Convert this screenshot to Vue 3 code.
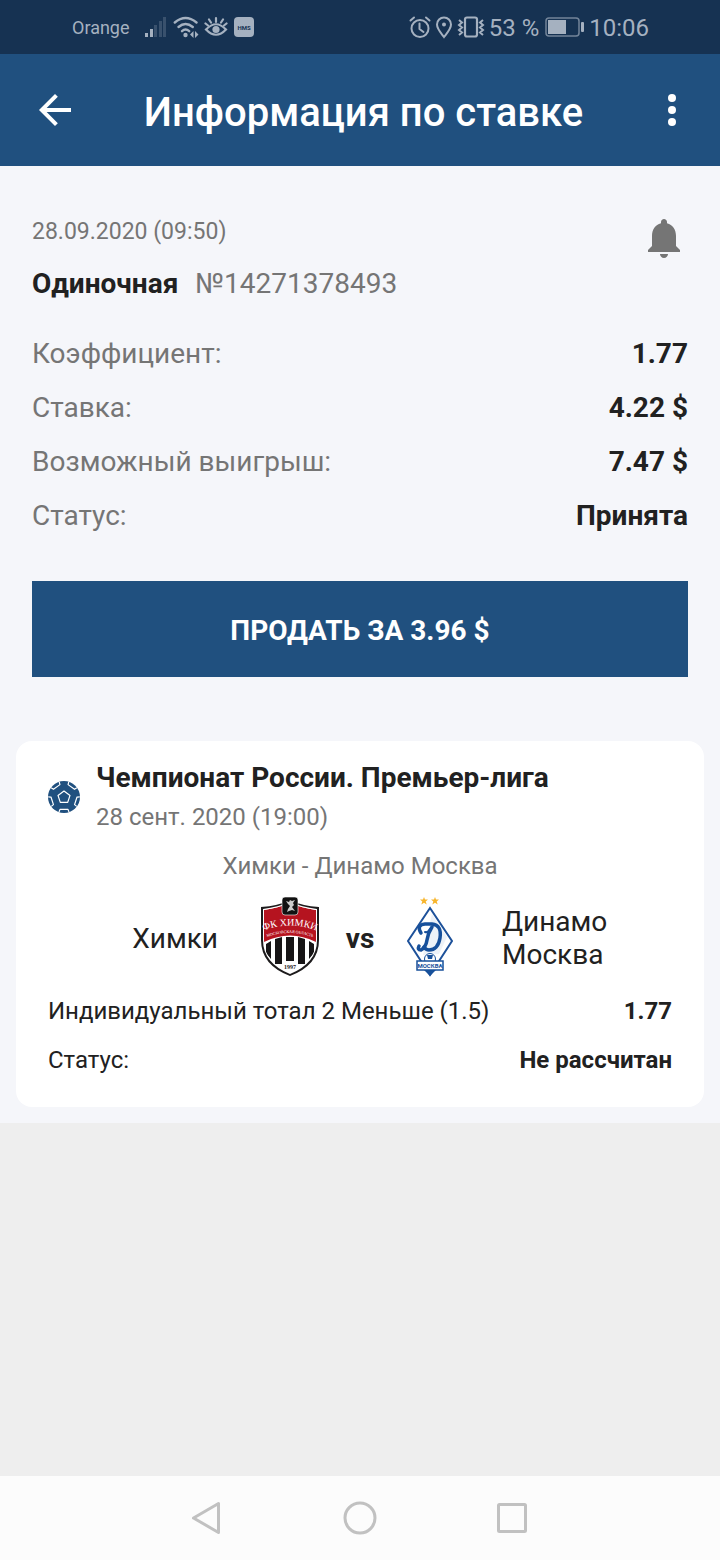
<template>
  <div class="screen">
    <div class="status-bar">
      <div class="status-group">
        <span class="carrier">Orange</span>
        <svg class="signal" width="24" height="24" viewBox="0 0 24 24" aria-hidden="true">
          <rect v-for="(b, i) in signalBars" :key="i" :x="b.x" :y="22 - b.h" width="3" :height="b.h" :opacity="b.on ? 1 : 0.25"/>
        </svg>
        <svg width="26" height="24" viewBox="0 0 26 24" aria-hidden="true">
          <g fill="none" stroke="currentColor" stroke-width="2.4" stroke-linecap="round">
            <path d="M1.800 7.500Q12.500-1.500 23.500 7.500"/>
            <path d="M5.500 12Q12.500 6 19.800 12"/>
            <path d="M9 16.200Q12.500 13 16.200 16.200"/>
          </g>
          <circle cx="12.500" cy="20" r="2.200"/>
          <path d="M20.500 16v7l-3.500-3.500zM22 16v7l3.500-3.500z"/>
        </svg>
        <svg width="24" height="24" viewBox="0 0 24 24" aria-hidden="true">
          <g fill="none" stroke="currentColor" stroke-width="2.2" stroke-linecap="round">
            <path d="M2 14.500Q12 4 22 14.500Q12 25 2 14.500z"/>
            <path d="M12 3v4M5 4.500l2 3M19 4.500l-2 3M1.500 8.500l2.500 2M22.500 8.500l-2.500 2"/>
          </g>
          <circle cx="12" cy="14.500" r="3.600"/>
        </svg>
        <svg class="hms" width="20" height="20" viewBox="0 0 20 20" aria-hidden="true">
          <rect width="20" height="20" rx="4"/>
          <text x="10" y="13">HMS</text>
        </svg>
      </div>
      <div class="status-group right">
        <svg width="22" height="24" viewBox="0 0 22 24" aria-hidden="true">
          <g fill="none" stroke="currentColor" stroke-width="2" stroke-linecap="round" stroke-linejoin="round">
            <circle cx="11" cy="13.500" r="8.500"/>
            <path d="M10.500 8.500v5.500l4 3M1.500 5.500L5 2.500M20.500 5.500L17 2.500"/>
          </g>
        </svg>
        <svg class="pin" width="18" height="24" viewBox="0 0 18 24" aria-hidden="true">
          <path d="M9 22C6 18 2 14 2 9.500a7 7 0 0 1 14 0C16 14 12 18 9 22z" fill="none" stroke="currentColor" stroke-width="2"/>
          <circle cx="9" cy="9.500" r="2"/>
        </svg>
        <svg class="vibrate" width="28" height="24" viewBox="0 0 28 24" aria-hidden="true">
          <g fill="none" stroke="currentColor" stroke-width="2">
            <rect x="8" y="2.500" width="12" height="19" rx="2" stroke-width="2.200"/>
            <path d="M2 5l3 2.500-3 2.500 3 2.500-3 2.500 3 2.500L2 20M26 5l-3 2.500 3 2.500-3 2.500 3 2.500-3 2.500L26 20"/>
          </g>
        </svg>
        <span class="battery-text">53 %</span>
        <svg class="battery" width="40" height="20" viewBox="0 0 40 20" aria-hidden="true">
          <rect x="1" y="1" width="33" height="18" rx="3" fill="none" stroke="currentColor" stroke-width="1.5" opacity=".65"/>
          <rect x="3" y="3" width="18" height="14"/>
          <rect x="36" y="5" width="3" height="10" rx="1"/>
        </svg>
        <span class="clock">10:06</span>
      </div>
    </div>

    <header class="app-bar">
      <button class="icon-btn" type="button" aria-label="Назад">
        <svg width="48" height="48" viewBox="0 0 24 24" aria-hidden="true">
          <path d="M20 11H7.830l5.590-5.590L12 4l-8 8 8 8 1.410-1.410L7.830 13H20v-2z"/>
        </svg>
      </button>
      <h1>Информация по ставке</h1>
      <button class="icon-btn" type="button" aria-label="Меню">
        <svg width="48" height="48" viewBox="0 0 24 24" aria-hidden="true">
          <circle cx="12" cy="6" r="2"/>
          <circle cx="12" cy="12" r="2"/>
          <circle cx="12" cy="18" r="2"/>
        </svg>
      </button>
    </header>

    <main class="content">
      <section class="bet">
        <div class="bet-head">
          <div>
            <div class="bet-date">28.09.2020 (09:50)</div>
            <div class="bet-type"><b>Одиночная</b><span>№14271378493</span></div>
          </div>
          <button class="icon-btn bell" type="button" aria-label="Уведомления">
            <svg width="48" height="48" viewBox="0 0 24 24" aria-hidden="true">
              <path d="M12 22c1.100 0 2-.9 2-2h-4c0 1.100.89 2 2 2zm6-6v-5c0-3.070-1.640-5.640-4.500-6.320V4c0-.83-.67-1.500-1.500-1.500s-1.500.67-1.500 1.500v.68C7.630 5.360 6 7.920 6 11v5l-2 2v1h16v-1l-2-2z"/>
            </svg>
          </button>
        </div>

        <dl class="rows">
          <div v-for="r in rows" :key="r.label" class="row">
            <dt>{{ r.label }}</dt>
            <dd>{{ r.value }}</dd>
          </div>
        </dl>

        <button class="sell" type="button">ПРОДАТЬ ЗА 3.96 $</button>
      </section>

      <article class="card">
        <div class="league">
          <svg class="ball" width="32" height="32" viewBox="0 0 32 32" aria-hidden="true">
            <circle cx="16" cy="16" r="16" fill="#20507f"/>
            <g fill="none" stroke="#fff" stroke-width="1.200" stroke-linejoin="round">
              <path d="M16 10l6 4.400-2.300 7h-7.400l-2.300-7z"/>
              <path v-for="a in ballAngles" :key="a" :transform="`rotate(${a} 16 16)`" d="M11 31l1-2.600h8l1 2.600"/>
            </g>
          </svg>
          <div>
            <h2>Чемпионат России. Премьер-лига</h2>
            <div class="league-date">28 сент. 2020 (19:00)</div>
          </div>
        </div>

        <div class="match">Химки - Динамо Москва</div>

        <div class="teams">
          <div class="team home">Химки</div>
          <svg width="80" height="80" viewBox="0 0 80 80" aria-hidden="true">
            <defs>
              <clipPath id="shield">
                <path d="M14 13Q28 11 40 6Q52 11 66 13V43Q66 66 40 75Q14 66 14 43z"/>
              </clipPath>
              <path id="crestArc" d="M10 35Q40 22 70 35"/>
              <path id="crestArcSmall" d="M10 43Q40 29 70 43"/>
            </defs>
            <path d="M11 10Q28 9 40 3Q52 9 69 10V43Q69 68 40 79Q11 68 11 43z" fill="#1d1b1c"/>
            <path d="M13 12Q28 10 40 5Q52 10 67 12V43Q67 66 40 77Q13 66 13 43z" fill="#fff"/>
            <g clip-path="url(#shield)">
              <path d="M14 13Q28 11 40 6Q52 11 66 13V45Q40 32 14 45z" fill="#b5131f"/>
              <path d="M16 47l5-3v18l-5-6zM25 42l7-2v27h-7zM36 40h8v24h-8zM48 40l7 2v25h-7zM59 44l5 3v9l-5 6z" fill="#171516"/>
            </g>
            <rect x="32" y="0" width="16" height="18" rx="3" fill="#111" stroke="#fff" stroke-width=".6"/>
            <path d="M36 4l3 1 1-2 2 1 3-1-2 3 1 2-2 2 3 4-3-1-3 1-2 1 1-3 2-3-2-2z" fill="#ccc"/>
            <text class="crest-name"><textPath href="#crestArc" startOffset="50%">ФК ХИМКИ</textPath></text>
            <text class="crest-region"><textPath href="#crestArcSmall" startOffset="50%">МОСКОВСКАЯ ОБЛАСТЬ</textPath></text>
            <text class="crest-year" x="40" y="72">1997</text>
          </svg>
          <div class="vs">vs</div>
          <svg width="80" height="80" viewBox="0 0 80 80" aria-hidden="true">
            <path d="M34 0l1 2.500h3l-2.300 2 1 3L34 5.800l-2.700 1.700 1-3-2.300-2h3zM45 0l1 2.500h3l-2.300 2 1 3L45 5.800l-2.700 1.700 1-3-2.300-2h3z" fill="#f7b52c"/>
            <path d="M40 11L62 44L40 78L18 44z" fill="#fff" stroke="#1d519a" stroke-width="2"/>
            <path d="M42 17L57 40L49 57L33 58z" fill="#dce6f1" opacity=".5"/>
            <g fill="none" stroke="#17509b" stroke-linecap="round" stroke-linejoin="round">
              <path d="M31 36Q26 28 35 27H42Q52 28 50 41Q48 53 39 53Q36 53 34 50" stroke-width="3.500"/>
              <path d="M42 30Q38 36 37 43T31 53Q27 53 29 49" stroke-width="3.500"/>
              <path d="M35 35Q38 36 40 32" stroke-width="2"/>
            </g>
            <circle cx="40" cy="62" r="5.500" fill="#fff" stroke="#17509b"/>
            <path d="M37 58h6l-1 4h-4z" fill="#17509b"/>
            <path d="M34 73h12l-6 6z" fill="#17509b"/>
            <rect x="27" y="64" width="26" height="9" fill="#fff" stroke="#17509b" stroke-width="1.500"/>
            <text class="dynamo-city" x="40" y="71">МОСКВА</text>
          </svg>
          <div class="team away">Динамо Москва</div>
        </div>

        <div class="outcome">
          <span>Индивидуальный тотал 2 Меньше (1.5)</span>
          <b>1.77</b>
        </div>
        <div class="outcome">
          <span>Статус:</span>
          <b>Не рассчитан</b>
        </div>
      </article>
    </main>

    <nav class="nav-bar">
      <button type="button" aria-label="Назад">
        <svg width="36" height="36" viewBox="0 0 36 36" aria-hidden="true">
          <path d="M28.500 3.500v29L3.500 18z"/>
        </svg>
      </button>
      <button type="button" aria-label="Домой">
        <svg width="36" height="36" viewBox="0 0 36 36" aria-hidden="true">
          <circle cx="18" cy="18" r="15"/>
        </svg>
      </button>
      <button type="button" aria-label="Недавние">
        <svg width="36" height="36" viewBox="0 0 36 36" aria-hidden="true">
          <rect x="4.500" y="4.500" width="27" height="27" rx="1"/>
        </svg>
      </button>
    </nav>
  </div>
</template>

<script setup>
const signalBars = [
  { x: 1, h: 4, on: true },
  { x: 6, h: 8, on: true },
  { x: 10, h: 12, on: false },
  { x: 15, h: 16, on: false },
  { x: 19, h: 20, on: false }
]

const ballAngles = [0, 72, 144, 216, 288]

const rows = [
  { label: 'Коэффициент:', value: '1.77' },
  { label: 'Ставка:', value: '4.22 $' },
  { label: 'Возможный выигрыш:', value: '7.47 $' },
  { label: 'Статус:', value: 'Принята' }
]
</script>

<style>
body { background: #eee; }
</style>

<style scoped>
.screen {
  display: flex;
  flex-direction: column;
  min-height: 100vh;
  background: #eee;
  color: #212121;
  font-family: Roboto, "Noto Sans", sans-serif;
}
svg { display: block; flex: none; fill: currentColor; }
button { border: 0; padding: 0; background: none; color: inherit; font-family: inherit; cursor: pointer; }
h1, h2, dl, dd { margin: 0; }

.status-bar {
  display: flex;
  justify-content: space-between;
  align-items: center;
  height: 54px;
  padding: 0 71px 0 72px;
  background: #163252;
  color: #a5b1c0;
}
.status-group { display: flex; align-items: center; gap: 5px; }
.status-group.right { gap: 4px; }
.carrier { font-size: 18px; }
.signal { margin-left: 9px; }
.hms { margin-left: 1px; }
.hms text { fill: #163252; font-size: 6px; font-weight: 700; text-anchor: middle; }
.battery-text, .clock { padding-top: 2px; font-size: 24px; line-height: 28px; white-space: nowrap; }
.battery { margin-left: 2px; }

.app-bar {
  display: flex;
  align-items: center;
  height: 112px;
  padding: 0 24px 0 31px;
  background: #20507f;
  color: #fff;
}
h1 { flex: 1; padding-top: 6px; font-size: 40px; line-height: 48px; font-weight: 500; text-align: center; }
.icon-btn { flex: none; }

.content { padding-bottom: 16px; background: #f5f6fa; }
.bet { padding: 48px 32px 64px; }
.bet-head { display: flex; justify-content: space-between; align-items: flex-start; }
.bet-date { padding-top: 4px; color: #757575; font-size: 23px; line-height: 28px; }
.bet-type { display: flex; gap: 17px; padding-top: 21px; font-size: 28px; line-height: 34px; }
.bet-type span { color: #757575; }
.bell { color: #757575; }
.rows { display: flex; flex-direction: column; gap: 20px; padding: 36px 0 48px; }
.row { display: flex; justify-content: space-between; font-size: 28px; line-height: 34px; }
.row dt { color: #757575; }
.row dd { font-weight: 700; }
.sell {
  width: 100%;
  height: 96px;
  padding-top: 2px;
  background: #20507f;
  color: #fff;
  font-size: 28px;
  font-weight: 700;
}

.card { margin: 0 16px; padding: 20px 32px 32px; border-radius: 16px; background: #fff; }
.league { display: flex; align-items: center; gap: 16px; }
h2 { font-size: 28px; line-height: 34px; font-weight: 700; }
.league-date { padding-top: 6px; color: #757575; font-size: 24px; line-height: 32px; }
.match { padding: 18px 0 16px; color: #757575; font-size: 24px; line-height: 30px; text-align: center; }
.teams { display: grid; grid-template-columns: 1fr 80px 60px 80px 1fr; align-items: center; }
.team { padding-top: 2px; font-size: 28px; line-height: 33px; }
.home { padding-right: 32px; text-align: right; }
.away { padding-left: 32px; }
.vs { padding-top: 2px; font-size: 28px; font-weight: 700; text-align: center; }
.crest-name { fill: #fff; font-family: "Liberation Serif", serif; font-size: 10px; text-anchor: middle; }
.crest-region { fill: #fff; font-family: "Liberation Serif", serif; font-size: 4px; text-anchor: middle; }
.crest-year { fill: #171516; font-family: "Liberation Serif", serif; font-size: 6px; font-weight: 700; text-anchor: middle; }
.dynamo-city { fill: #17509b; font-size: 6px; font-weight: 700; text-anchor: middle; }
.outcome { display: flex; justify-content: space-between; padding-top: 19px; font-size: 24px; line-height: 30px; }

.nav-bar {
  display: flex;
  justify-content: center;
  align-items: center;
  gap: 116px;
  height: 84px;
  margin-top: auto;
  background: #fcfcfc;
  color: #c1c1c1;
}
.nav-bar svg { fill: none; stroke: currentColor; stroke-width: 3px; stroke-linejoin: round; }
</style>
